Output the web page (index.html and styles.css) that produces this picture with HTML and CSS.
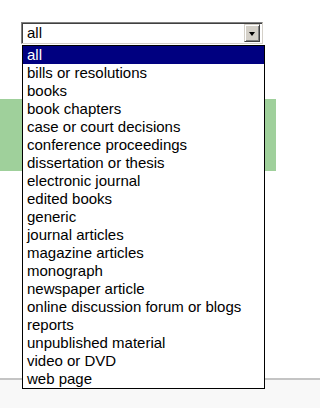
FILE: index.html
```html
<!DOCTYPE html>
<html>
<head>
<meta charset="utf-8">
<link rel="stylesheet" href="styles.css">
</head>
<body>
<div class="page">
  <div class="field">
    <div class="select">
      <span class="value">all</span>
      <span class="arrow-btn"><span class="arrow"></span></span>
    </div>
  </div>
  <div class="band"></div>
  <div class="spacer"></div>
  <div class="footer"></div>
  <ul class="dropdown">
    <li class="selected">all</li>
    <li>bills or resolutions</li>
    <li>books</li>
    <li>book chapters</li>
    <li>case or court decisions</li>
    <li>conference proceedings</li>
    <li>dissertation or thesis</li>
    <li>electronic journal</li>
    <li>edited books</li>
    <li>generic</li>
    <li>journal articles</li>
    <li>magazine articles</li>
    <li>monograph</li>
    <li>newspaper article</li>
    <li>online discussion forum or blogs</li>
    <li>reports</li>
    <li>unpublished material</li>
    <li>video or DVD</li>
    <li>web page</li>
  </ul>
</div>
</body>
</html>
```

FILE: styles.css
```css
html, body {
  margin: 0;
  padding: 0;
  background: #ffffff;
}
body {
  font-family: "Liberation Sans", Arial, sans-serif;
  font-size: 15px;
  color: #000;
}
.page {
  position: relative;
  height: 408px;
  overflow: hidden;
  display: flex;
  flex-direction: column;
}
.field {
  padding: 22px 0 0 21px;
}
.select {
  box-sizing: border-box;
  width: 242px;
  height: 22px;
  border-top: 1px solid #808080;
  border-left: 1px solid #808080;
  border-right: 1px solid #d4d0c8;
  border-bottom: 1px solid #d4d0c8;
  box-shadow: inset 1px 1px 0 #404040, inset -1px -1px 0 #ffffff;
  background: #fff;
  display: flex;
  align-items: center;
  justify-content: space-between;
  padding: 2px 2px 2px 5px;
}
.value {
  line-height: 16px;
}
.arrow-btn {
  box-sizing: border-box;
  width: 16px;
  height: 18px;
  background: #d4d0c8;
  border-top: 1px solid #d4d0c8;
  border-left: 1px solid #d4d0c8;
  border-right: 1px solid #404040;
  border-bottom: 1px solid #404040;
  box-shadow: inset 1px 1px 0 #ffffff, inset -1px -1px 0 #808080;
  display: flex;
  align-items: center;
  justify-content: center;
}
.arrow {
  width: 0;
  height: 0;
  border-left: 3.5px solid transparent;
  border-right: 3.5px solid transparent;
  border-top: 4px solid #000;
  margin-top: 1px;
}
.band {
  margin-top: 55px;
  width: 276px;
  height: 72px;
  background: #9fd09b;
}
.spacer {
  flex: 1;
}
.footer {
  height: 28px;
  border-top: 2px solid #c4c4c4;
  background: #f8f8f8;
}
.dropdown {
  position: absolute;
  left: 22px;
  top: 45px;
  box-sizing: border-box;
  width: 243px;
  margin: 0;
  padding: 0;
  list-style: none;
  background: #fff;
  border: 1px solid #000;
}
.dropdown li {
  height: 18px;
  line-height: 18px;
  padding-left: 4px;
  white-space: nowrap;
}
.dropdown li.selected {
  background: #000080;
  color: #fff;
}
```
